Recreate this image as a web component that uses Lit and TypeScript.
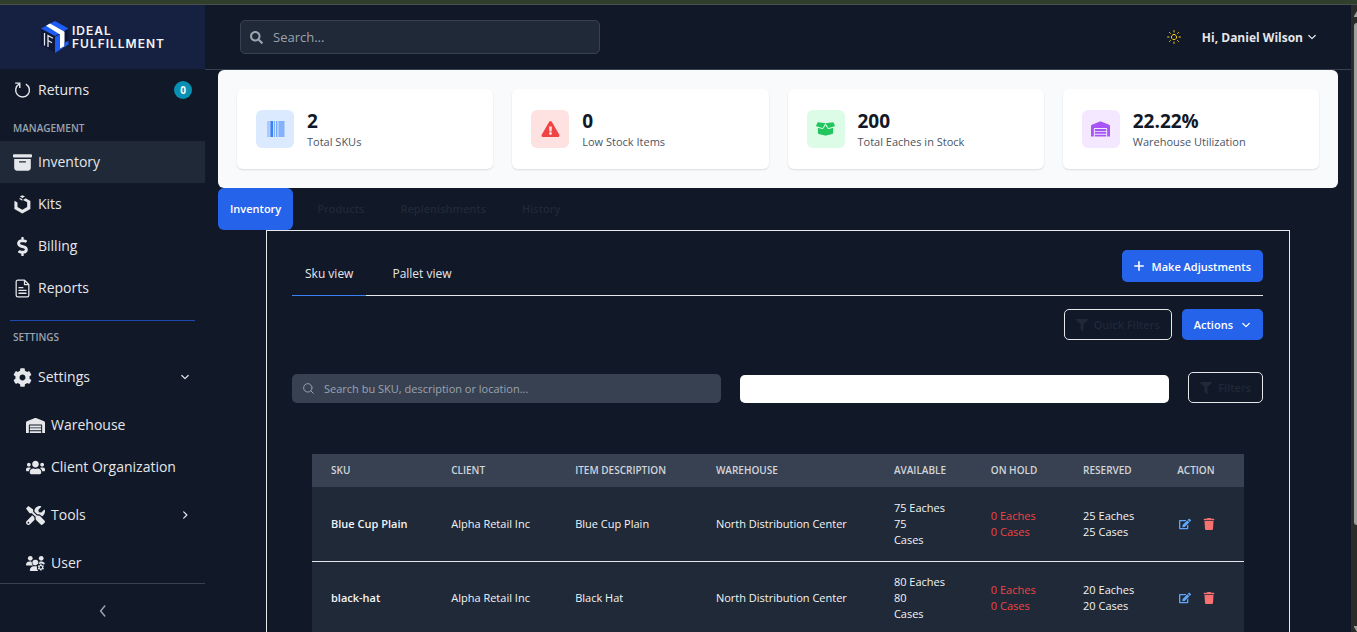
import { LitElement, html, css, svg, nothing } from "lit";
import { customElement, state } from "lit/decorators.js";
import { classMap } from "lit/directives/class-map.js";

type Glyph = { box: string; body: unknown };

const solid = (box: string, d: string): Glyph => ({ box, body: svg`<path fill="currentColor" d=${d}></path>` });
const line = (box: string, d: string, width = 2): Glyph => ({
  box,
  body: svg`<path fill="none" stroke="currentColor" stroke-width=${width} stroke-linecap="round" stroke-linejoin="round" d=${d}></path>`,
});

const GLYPHS: Record<string, Glyph> = {
  returns: {
    box: "0 0 16 16",
    body: svg`<g fill="none" stroke="currentColor" stroke-width="1.2"><path d="M10.8 2.600a5.800 5.800 0 1 1-5.700.1"></path><path d="M1.800 1.800h3.900v4"></path></g>`,
  },
  archive: solid("0 0 16 16", "M12.643 15C13.979 15 15 13.845 15 12.5V5H1v7.5C1 13.845 2.021 15 3.357 15zM5.5 7h5a.5.5 0 0 1 0 1h-5a.5.5 0 0 1 0-1M.8 1a.8.8 0 0 0-.8.8V3a.8.8 0 0 0 .8.8h14.4A.8.8 0 0 0 16 3V1.8a.8.8 0 0 0-.8-.8z"),
  kits: solid("0 0 18 20", "M.5 6l3.200 1.900v4.700l5.100 3 5.100-3V7.600L9.600 5.200 12.200 3.300l5.100 2.900v8.500l-8.500 4.900-8.300-4.900zM6.200 1.600L8.900.2l2.700 1.400-2.700 1.500zM5.200 3.900l1.800-.6 2 1.200-.2 1.500z"),
  dollar: solid("0 0 288 512", "M209.200 233.400l-108-31.600C88.700 198.200 80 186.500 80 173.500c0-16.300 13.200-29.500 29.500-29.500h66.300c12.200 0 24.200 3.700 34.200 10.500 6.100 4.100 14.300 3.100 19.500-2l34.800-34c7.100-6.900 6.100-18.400-1.800-24.500C238 74.800 207.400 64.100 176 64V16c0-8.800-7.200-16-16-16h-32c-8.800 0-16 7.200-16 16v48h-2.500C45.800 64-5.400 118.700.5 183.600c4.200 46.100 39.400 83.600 83.800 96.600l102.500 30c12.500 3.700 21.200 15.300 21.200 28.300 0 16.300-13.200 29.500-29.500 29.500h-66.300C100 368 88 364.300 78 357.500c-6.100-4.100-14.300-3.100-19.500 2l-34.800 34c-7.100 6.900-6.100 18.400 1.800 24.500 24.500 19.200 55.100 29.900 86.500 30v48c0 8.800 7.200 16 16 16h32c8.800 0 16-7.200 16-16v-48.200c46.600-.9 90.300-28.600 105.700-72.700 21.500-61.600-14.600-124.800-72.500-141.700z"),
  report: line("0 0 24 24", "M14.500 1.500H6a2 2 0 0 0-2 2v17a2 2 0 0 0 2 2h12a2 2 0 0 0 2-2V7zM14.500 1.500V7H20M7.500 11h5M7.500 14.500h9M7.500 18h9", 1.6),
  cog: solid("0 0 512 512", "M487.400 315.700l-42.600-24.600c4.300-23.200 4.300-47 0-70.200l42.600-24.600c4.900-2.800 7.100-8.600 5.500-14-11.100-35.600-30-67.800-54.700-94.600-3.800-4.100-10-5.100-14.800-2.300L380.800 110c-17.900-15.400-38.500-27.300-60.800-35.100V25.800c0-5.600-3.900-10.500-9.400-11.700-36.700-8.200-74.300-7.800-109.200 0-5.500 1.200-9.400 6.100-9.400 11.700V75c-22.200 7.900-42.800 19.800-60.800 35.100L88.700 85.500c-4.900-2.800-11-1.900-14.800 2.300-24.700 26.700-43.600 58.900-54.700 94.600-1.700 5.400.6 11.200 5.500 14L67.300 221c-4.300 23.200-4.300 47 0 70.200l-42.600 24.600c-4.900 2.800-7.100 8.600-5.500 14 11.100 35.600 30 67.800 54.700 94.600 3.800 4.100 10 5.100 14.800 2.300l42.600-24.600c17.900 15.400 38.500 27.300 60.800 35.100v49.200c0 5.600 3.900 10.500 9.400 11.700 36.700 8.200 74.300 7.800 109.200 0 5.500-1.200 9.400-6.100 9.400-11.700v-49.200c22.200-7.900 42.800-19.800 60.800-35.100l42.600 24.600c4.900 2.800 11 1.900 14.800-2.300 24.700-26.700 43.600-58.900 54.700-94.600 1.500-5.500-.7-11.300-5.600-14.100zM256 336c-44.100 0-80-35.900-80-80s35.900-80 80-80 80 35.900 80 80-35.900 80-80 80z"),
  warehouse: solid("0 0 640 512", "M504 352H136.400c-4.400 0-8 3.600-8 8l-.1 48c0 4.400 3.600 8 8 8H504c4.400 0 8-3.600 8-8v-48c0-4.400-3.600-8-8-8zm0 96H136.100c-4.400 0-8 3.600-8 8l-.1 48c0 4.400 3.600 8 8 8h368c4.400 0 8-3.600 8-8v-48c0-4.400-3.600-8-8-8zm0-192H136.600c-4.400 0-8 3.600-8 8l-.1 48c0 4.400 3.600 8 8 8H504c4.400 0 8-3.600 8-8v-48c0-4.400-3.600-8-8-8zm106.500-139L338.400 3.700a48.150 48.150 0 0 0-36.900 0L29.500 117C11.700 124.500 0 141.900 0 161.300V504c0 4.400 3.600 8 8 8h80c4.400 0 8-3.600 8-8V256c0-17.600 14.600-32 32.600-32h382.800c18 0 32.600 14.400 32.600 32v248c0 4.400 3.600 8 8 8h80c4.400 0 8-3.600 8-8V161.300c0-19.400-11.700-36.800-29.500-44.300z"),
  users: solid("0 0 640 512", "M96 224c35.300 0 64-28.700 64-64s-28.700-64-64-64-64 28.700-64 64 28.700 64 64 64zm448 0c35.300 0 64-28.700 64-64s-28.700-64-64-64-64 28.700-64 64 28.700 64 64 64zm32 32h-64c-17.600 0-33.500 7.100-45.100 18.600 40.300 22.100 68.900 62 75.100 109.400h66c17.700 0 32-14.300 32-32v-32c0-35.300-28.700-64-64-64zm-256 0c61.900 0 112-50.100 112-112S381.900 32 320 32 208 82.100 208 144s50.100 112 112 112zm76.800 32h-8.300c-20.800 10-43.900 16-68.500 16s-47.600-6-68.500-16h-8.300C179.600 288 128 339.600 128 403.200V432c0 26.500 21.500 48 48 48h288c26.500 0 48-21.500 48-48v-28.800c0-63.600-51.600-115.200-115.200-115.200zm-223.700-13.400C161.500 263.100 145.600 256 128 256H64c-35.300 0-64 28.700-64 64v32c0 17.700 14.300 32 32 32h65.900c6.300-47.400 34.900-87.300 75.200-109.400z"),
  tools: solid("0 0 512 512", "M501.100 395.700L384 278.600c-23.100-23.100-57.600-27.600-85.400-13.900L192 158.100V96L64 0 0 64l96 128h62.100l106.600 106.600c-13.600 27.800-9.200 62.300 13.900 85.400l117.100 117.100c14.600 14.600 38.200 14.600 52.700 0l52.700-52.700c14.500-14.600 14.500-38.200 0-52.700zM331.700 225c28.300 0 54.900 11 74.900 31l19.400 19.400c15.800-6.900 30.800-16.500 43.800-29.500 37.100-37.100 49.700-89.300 37.900-136.700-2.200-9-13.500-12.100-20.100-5.500l-74.400 74.400-67.900-11.300L334 98.900l74.400-74.400c6.600-6.600 3.400-17.900-5.700-20.200-47.400-11.700-99.600.9-136.600 37.900-28.500 28.500-41.900 66.100-41.200 103.600l82.100 82.100c8.100-1.900 16.500-2.900 24.700-2.900zm-103.900 82l-56.700-56.700L18.700 402.800c-25 25-25 65.500 0 90.500s65.500 25 90.500 0l123.600-123.600c-7.600-19.900-9.900-41.600-5-62.700zM64 472c-13.200 0-24-10.800-24-24 0-13.300 10.700-24 24-24s24 10.700 24 24c0 13.200-10.700 24-24 24z"),
  userCog: {
    box: "0 0 640 512",
    body: svg`<g fill="currentColor"><circle cx="144" cy="80" r="80"></circle><circle cx="512" cy="80" r="80"></circle><path d="M0 298.700C0 239.800 47.800 192 106.700 192h42.600c16 0 31 3.500 44.600 9.700-1.300 7.200-1.900 14.700-1.900 22.300 0 38.200 16.800 72.500 43.300 96H21.300C9.600 320 0 310.400 0 298.700zM320 128a96 96 0 0 1 92 124l-26 30a96 96 0 1 1-66-154zM448 202c14-7 28-10 42.700-10h42.600c50 0 92 34 104 80l-50 14c-40-44-106-44-150-6l-6-20c16-22 22-40 17-58zM128 485.300C128 411.700 187.700 352 261.300 352H372c-16 52-4 114 42 160H154.700c-14.700 0-26.700-12-26.700-26.700z"></path><path fill-rule="evenodd" d="M479 278h44l8 34 18 10 33-10 22 38-25 24v20l25 24-22 38-33-10-18 10-8 36h-44l-8-36-18-10-33 10-22-38 25-24v-20l-25-24 22-38 33 10 18-10zM501 344a40 40 0 1 0 .1 0z"></path></g>`,
  },
  search: solid("0 0 512 512", "M505 442.700L405.300 343c-4.500-4.500-10.600-7-17-7H372c27.600-35.300 44-79.700 44-128C416 93.100 322.900 0 208 0S0 93.100 0 208s93.100 208 208 208c48.300 0 92.700-16.400 128-44v16.300c0 6.400 2.500 12.500 7 17l99.700 99.700c9.400 9.400 24.600 9.400 33.900 0l28.300-28.300c9.400-9.400 9.400-24.600.1-34zM208 336c-70.700 0-128-57.200-128-128 0-70.700 57.200-128 128-128 70.700 0 128 57.200 128 128 0 70.700-57.200 128-128 128z"),
  lens: line("0 0 24 24", "M21 21l-4.800-4.800M18.500 10.800a7.700 7.700 0 1 1-15.500 0a7.700 7.700 0 1 1 15.500 0", 1.8),
  sun: line("0 0 24 24", "M12 7.500a4.500 4.500 0 1 0 .01 0M12 1v2.500M12 20.500V23M1 12h2.500M20.500 12H23M4.200 4.200l1.600 1.600M18.200 18.200l1.600 1.600M4.200 19.800l1.600-1.600M18.200 5.800l1.600-1.600", 1.7),
  down: line("0 0 10 10", "M1.800 3.500L5 6.700l3.200-3.200", 1.2),
  right: line("0 0 10 10", "M3.700 1.800L6.900 5 3.700 8.200", 1.2),
  left: line("0 0 10 10", "M6.500 .8L3 5l3.500 4.200", 1.2),
  plus: line("0 0 10 10", "M5 .8v8.400M.8 5h8.400", 1.6),
  filter: solid("0 0 512 512", "M487.976 0H24.028C2.710 0-8.047 25.866 7.058 40.971L192 225.941V432c0 7.831 3.821 15.170 10.237 19.662l80 55.980C298.020 518.690 320 507.493 320 487.980V225.941l184.947-184.970C520.021 25.896 509.338 0 487.976 0z"),
  barcode: {
    box: "0 0 18 16",
    body: svg`<g fill="#3b82f6"><path opacity=".3" d="M.5 0h2.500v16H.5z"></path><path d="M4 0h2.500v16H4z"></path><path opacity=".55" d="M3.300 0h.7v16h-.7zM7.300 0h1.200v16H7.300zM12.500 0h5.500v16h-5.500z"></path><path opacity=".8" d="M9.700 0h.9v16h-.9z"></path><path opacity=".3" d="M11 0h1.500v16H11z"></path></g>`,
  },
  alert: solid("0 0 576 512", "M569.517 440.013C587.975 472.007 564.806 512 527.940 512H48.054c-36.937 0-59.999-40.055-41.577-71.987L246.423 23.985c18.467-32.009 64.720-31.951 83.154 0l239.940 416.028zM288 354c-25.405 0-46 20.595-46 46s20.595 46 46 46 46-20.595 46-46-20.595-46-46-46zm-43.673-165.346l7.418 136c.347 6.364 5.609 11.346 11.982 11.346h48.546c6.373 0 11.635-4.982 11.982-11.346l7.418-136c.375-6.874-5.098-12.654-11.982-12.654h-63.383c-6.884 0-12.356 5.780-11.981 12.654z"),
  boxOpen: solid("0 0 640 512", "M425.700 256c-16.900 0-32.800-9-41.400-23.400L320 126l-64.200 106.600c-8.700 14.500-24.600 23.500-41.500 23.500-4.500 0-9-.6-13.300-1.900L64 215v178c0 14.700 10 27.500 24.200 31l216.200 54.100c10.200 2.500 20.900 2.500 31 0L551.800 424c14.200-3.600 24.200-16.400 24.200-31V215l-137 39.100c-4.300 1.300-8.800 1.900-13.300 1.900zm212.600-112.200L586.800 41c-3.100-6.200-9.800-9.800-16.700-8.900L320 64l91.700 152.100c3.800 6.300 11.400 9.300 18.500 7.300l197.900-56.500c9.900-2.900 14.700-13.900 10.200-23.100zM53.200 41L1.700 143.800c-4.600 9.200.3 20.200 10.100 23l197.900 56.500c7.100 2 14.700-1 18.500-7.300L320 64 69.800 32.100c-6.900-.8-13.500 2.700-16.600 8.900z"),
  edit: solid("0 0 576 512", "M402.600 83.200l90.200 90.200c3.800 3.800 3.800 10 0 13.800L274.400 405.600l-92.800 10.300c-12.400 1.400-22.900-9.100-21.500-21.500l10.300-92.800L388.800 83.200c3.800-3.800 10-3.800 13.800 0zm162-22.900l-48.800-48.800c-15.200-15.200-39.900-15.200-55.200 0l-35.400 35.400c-3.800 3.800-3.800 10 0 13.800l90.200 90.200c3.800 3.800 10 3.800 13.800 0l35.400-35.400c15.200-15.300 15.200-40 0-55.200zM384 346.200V448H64V128h229.800c3.200 0 6.200-1.300 8.500-3.500l40-40c7.600-7.600 2.200-20.500-8.500-20.500H48C21.500 64 0 85.500 0 112v352c0 26.500 21.500 48 48 48h352c26.500 0 48-21.500 48-48V306.200c0-10.700-12.900-16-20.500-8.500l-40 40c-2.200 2.300-3.500 5.300-3.500 8.500z"),
  trash: solid("0 0 448 512", "M432 32H312l-9.400-18.700A24 24 0 0 0 281.100 0H166.800a23.720 23.720 0 0 0-21.400 13.300L136 32H16A16 16 0 0 0 0 48v32a16 16 0 0 0 16 16h416a16 16 0 0 0 16-16V48a16 16 0 0 0-16-16zM53.200 467a48 48 0 0 0 47.900 45h245.800a48 48 0 0 0 47.900-45L416 128H32z"),
};

const icon = (name: string, cls = "i12") =>
  html`<svg class="icon ${cls}" viewBox=${GLYPHS[name].box} aria-hidden="true">${GLYPHS[name].body}</svg>`;

const base = css`
  * { box-sizing: border-box; }
  button, input { font: inherit; color: inherit; margin: 0; padding: 0; border: 0; background: none; }
  button, a { cursor: pointer; }
  a { color: inherit; text-decoration: none; }
  h2, p { margin: 0; font-weight: inherit; }
  .icon { flex: none; display: block; }
  .i10 { width: 10px; height: 10px; }
  .i12 { width: 12px; height: 12px; }
  .i13 { width: 13px; height: 13px; }
  .i19 { width: 19px; height: 19px; }
`;

@customElement("side-bar")
export class SideBar extends LitElement {
  static styles = [base, css`
    :host { display: flex; flex-direction: column; min-height: 0; background: #111827; color: #e5e7eb; }
    .brand { flex: none; height: 64px; display: flex; align-items: center; padding-left: 41px; gap: 3px; background: #162142; }
    .mark { width: 28px; height: 34px; flex: none; }
    .name { font: 600 12px/13px Inter, sans-serif; letter-spacing: 1px; color: #f3f4f6; }
    .name span { display: block; }
    nav { flex: 1; min-height: 0; overflow: hidden; }
    .item { display: flex; align-items: center; width: 100%; height: 42px; padding: 0 13px; gap: 6px; font-size: 14px; line-height: 20px; text-align: left; }
    .item.active { background: #1f2937; }
    .item.nested { padding-left: 26px; }
    .item span { flex: 1; }
    .item .badge { flex: none; width: 18px; height: 18px; border-radius: 9px; background: #0891b2; color: #fff; font-size: 10px; font-weight: 700; line-height: 18px; text-align: center; }
    .item .icon.chev { margin-right: 2px; }
    .group { font-size: 10px; line-height: 14px; font-weight: 600; color: #9ca3af; padding: 0 13px; }
    .group.first { margin: 10px 0 6px; }
    .second { margin: 11px 10px 12px; padding: 9px 3px 0; border-top: 1px solid #1e49b0; }
    .lead { margin-top: 6px; }
    .foot { flex: none; height: 49px; display: flex; align-items: center; justify-content: center; border-top: 1px solid #374151; color: #9ca3af; padding-top: 6px; }
  `];

  private item(name: string, label: string, cls = "", tail: unknown = nothing) {
    return html`<a href="#" class="item ${cls}">${icon(name, "i19")}<span>${label}</span>${tail}</a>`;
  }

  render() {
    return html`
      <div class="brand">
        <svg class="mark" viewBox="0 0 28 34" aria-hidden="true">
          <path fill="#0f1735" d="M0 8.500L14 16v17L0 25z"></path>
          <path fill="#0f1735" d="M24 11l3.500-2v13L24 24z"></path>
          <path fill="#1d5cf5" d="M0 8.500L14 1l13.500 7.500L14 16z"></path>
          <path fill="#fff" d="M5 5.800L9 3.600l14.500 8.200v14.500l-4.500 2.500V14.500z"></path>
          <path fill="#1d5cf5" d="M14 17l5-2.800v14.600l4.500-2.500v-3.800l4-1.500v3.500L14 33z"></path>
          <path fill="none" stroke="#e5e7eb" stroke-width="1.300" d="M3.500 13v12.500M7 27V15.500l5 2.800M7 20.500l4 2.200"></path>
        </svg>
        <div class="name"><span>IDEAL</span><span>FULFILLMENT</span></div>
      </div>
      <nav aria-label="Main">
        ${this.item("returns", "Returns", "", html`<b class="badge">0</b>`)}
        <p class="group first">MANAGEMENT</p>
        ${this.item("archive", "Inventory", "active")}
        ${this.item("kits", "Kits")}
        ${this.item("dollar", "Billing")}
        ${this.item("report", "Reports")}
        <p class="group second">SETTINGS</p>
        ${this.item("cog", "Settings", "", icon("down", "i10 chev"))}
        ${this.item("warehouse", "Warehouse", "nested lead")}
        ${this.item("users", "Client Organization", "nested")}
        ${this.item("tools", "Tools", "nested lead", icon("right", "i10 chev"))}
        ${this.item("userCog", "User", "nested lead")}
      </nav>
      <button class="foot" aria-label="Collapse sidebar">${icon("left", "i12")}</button>
    `;
  }
}

@customElement("top-bar")
export class TopBar extends LitElement {
  static styles = [base, css`
    :host { flex: none; height: 65px; display: flex; align-items: center; justify-content: space-between; padding: 0 34px 0 35px; border-bottom: 1px solid #374151; }
    .search { display: flex; align-items: center; gap: 10px; width: 360px; height: 34px; padding: 0 9px; border: 1px solid #374151; border-radius: 5px; background: #1f2937; color: #9ca3af; }
    input { flex: 1; min-width: 0; font-size: 13px; outline: 0; }
    input::placeholder { color: #9ca3af; opacity: 1; }
    .right { display: flex; align-items: center; gap: 21px; }
    .theme { color: #facc15; }
    .user { display: flex; align-items: center; gap: 4px; font-size: 12px; font-weight: 700; color: #e5e7eb; }
    .i14 { width: 14px; height: 14px; }
  `];
  render() {
    return html`
      <label class="search">${icon("search", "i13")}<input type="search" placeholder="Search..." aria-label="Search" /></label>
      <div class="right">
        <button class="theme" aria-label="Toggle theme">${icon("sun", "i14")}</button>
        <button class="user">Hi, Daniel Wilson ${icon("down", "i10")}</button>
      </div>
    `;
  }
}

const STATS = [
  { icon: "barcode", tone: "blue", value: "2", label: "Total SKUs" },
  { icon: "alert", tone: "red", value: "0", label: "Low Stock Items" },
  { icon: "boxOpen", tone: "green", value: "200", label: "Total Eaches in Stock" },
  { icon: "warehouse", tone: "purple", value: "22.22%", label: "Warehouse Utilization" },
];

@customElement("stat-cards")
export class StatCards extends LitElement {
  static styles = [base, css`
    :host { display: grid; grid-template-columns: repeat(4, 1fr); gap: 19px; padding: 19px; border-radius: 6px; background: #f9fafb; }
    .card { display: flex; align-items: center; gap: 13px; height: 80px; padding: 0 19px; border-radius: 6px; background: #fff; box-shadow: 0 1px 2px rgba(0, 0, 0, 0.12); }
    .tile { flex: none; width: 38px; height: 38px; border-radius: 6px; display: flex; align-items: center; justify-content: center; }
    .blue { background: #dbeafe; color: #3b82f6; }
    .red { background: #fee2e2; color: #ef4444; }
    .green { background: #dcfce7; color: #22c55e; }
    .purple { background: #f3e8ff; color: #a855f7; }
    .value { font-size: 19px; line-height: 26px; font-weight: 700; color: #111827; }
    .label { font-size: 11px; line-height: 16px; color: #4b5563; }
    .stat-icon { width: 19px; height: 16px; }
  `];
  render() {
    return STATS.map((s) => html`
      <div class="card">
        <div class="tile ${s.tone}">${icon(s.icon, "stat-icon")}</div>
        <div><p class="value">${s.value}</p><p class="label">${s.label}</p></div>
      </div>`);
  }
}

const ROWS = [
  { sku: "Blue Cup Plain", client: "Alpha Retail Inc", desc: "Blue Cup Plain", site: "North Distribution Center", free: 75, hold: 0, reserved: 25 },
  { sku: "black-hat", client: "Alpha Retail Inc", desc: "Black Hat", site: "North Distribution Center", free: 80, hold: 0, reserved: 20 },
];

@customElement("inventory-panel")
export class InventoryPanel extends LitElement {
  static styles = [base, css`
    :host { display: block; }
    .tabs { display: flex; gap: 12px; margin-right: 48px; }
    .tab { height: 42px; padding: 0 12px 2px; border-radius: 6px; font-size: 11px; font-weight: 600; color: #1f2937; }
    .tab.on { background: #2563eb; color: #fff; }
    .panel { margin: 0 48px; padding: 19px 26px 19px 25px; border: 1px solid #e5e7eb; min-height: 600px; }
    .views { display: flex; align-items: flex-start; border-bottom: 1px solid #e5e7eb; height: 46px; }
    .view { height: 46px; padding: 2px 13px 0; margin-right: 13px; font-size: 12px; color: #e5e7eb; border-bottom: 1px solid transparent; }
    .view.on { border-bottom-color: #3b82f6; }
    .btn { display: flex; align-items: center; justify-content: center; height: 31px; border-radius: 5px; font-size: 11px; font-weight: 600; white-space: nowrap; }
    .primary { background: #2563eb; color: #fff; padding: 0 12px; gap: 8px; }
    .adjust { height: 32px; margin-left: auto; }
    .ghost { border: 1px solid #e5e7eb; color: #1f2937; padding: 0 11px; gap: 6px; }
    .tools { display: flex; justify-content: flex-end; gap: 10px; margin-top: 13px; }
    .filters { display: grid; grid-template-columns: 1fr 1fr auto; align-items: end; column-gap: 19px; margin-top: 32px; }
    .find { display: flex; align-items: center; gap: 9px; height: 29px; padding: 0 10px; border-radius: 5px; background: #374151; color: #9ca3af; font-size: 11px; }
    .find input { flex: 1; min-width: 0; outline: 0; }
    .find input::placeholder { color: #9ca3af; opacity: 1; }
    .blank { height: 28px; border-radius: 5px; background: #fff; color: #111827; font-size: 11px; padding: 0 10px; min-width: 0; }
    .wrap { margin: 51px 19px 0 20px; }
    table { width: 100%; table-layout: fixed; border-collapse: collapse; background: #1f2937; color: #f3f4f6; font-size: 11px; line-height: 16px; }
    th { height: 33px; padding: 0 0 2px 19px; background: #374151; color: #d1d5db; font-size: 10px; font-weight: 600; text-align: left; white-space: nowrap; }
    td { height: 74px; padding: 0 0 0 19px; white-space: nowrap; }
    tbody tr { border-bottom: 1px solid #e5e7eb; }
    .sku { font-weight: 600; }
    .hold { color: #ef4444; }
    .free span, .hold span, .kept span { display: block; }
    .acts { display: flex; gap: 12px; padding-left: 2px; }
    .edit { color: #60a5fa; }
    .del { color: #f87171; }
    .c1 { width: 12.9%; } .c2 { width: 13.3%; } .c3 { width: 15.1%; } .c4 { width: 19.1%; }
    .c5 { width: 10.4%; } .c6 { width: 9.9%; } .c7 { width: 10.1%; }
  `];

  @state() private tab = "Inventory";
  @state() private view = "Sku view";

  render() {
    return html`
      <div class="tabs">
        ${["Inventory", "Products", "Replenishments", "History"].map((t) => html`
          <button class=${classMap({ tab: true, on: t === this.tab })} @click=${() => (this.tab = t)}>${t}</button>`)}
      </div>
      <div class="panel">
        <div class="views">
          ${["Sku view", "Pallet view"].map((v) => html`
            <button class=${classMap({ view: true, on: v === this.view })} @click=${() => (this.view = v)}>${v}</button>`)}
          <button class="btn primary adjust">${icon("plus", "i10")}Make Adjustments</button>
        </div>
        <div class="tools">
          <button class="btn ghost">${icon("filter", "i12")}Quick Filters</button>
          <button class="btn primary">Actions${icon("down", "i10")}</button>
        </div>
        <div class="filters">
          <label class="find">${icon("lens", "i13")}<input type="text" placeholder="Search bu SKU, description or location..." aria-label="Search inventory" /></label>
          <input class="blank" type="text" aria-label="Location" />
          <button class="btn ghost">${icon("filter", "i12")}Filters</button>
        </div>
        <div class="wrap">
          <table>
            <colgroup><col class="c1" /><col class="c2" /><col class="c3" /><col class="c4" /><col class="c5" /><col class="c6" /><col class="c7" /><col /></colgroup>
            <thead><tr>
              ${["SKU", "CLIENT", "ITEM DESCRIPTION", "WAREHOUSE", "AVAILABLE", "ON HOLD", "RESERVED", "ACTION"].map((h) => html`<th scope="col">${h}</th>`)}
            </tr></thead>
            <tbody>
              ${ROWS.map((r) => html`<tr>
                <td class="sku">${r.sku}</td><td>${r.client}</td><td>${r.desc}</td><td>${r.site}</td>
                <td class="free"><span>${r.free} Eaches</span><span>${r.free}</span><span>Cases</span></td>
                <td class="hold"><span>${r.hold} Eaches</span><span>${r.hold} Cases</span></td>
                <td class="kept"><span>${r.reserved} Eaches</span><span>${r.reserved} Cases</span></td>
                <td><div class="acts">
                  <button class="edit" aria-label="Edit ${r.sku}">${icon("edit", "i12")}</button>
                  <button class="del" aria-label="Delete ${r.sku}">${icon("trash", "i12")}</button>
                </div></td>
              </tr>`)}
            </tbody>
          </table>
        </div>
      </div>
    `;
  }
}

@customElement("app-root")
export class AppRoot extends LitElement {
  static styles = [base, css`
    :host { display: grid; grid-template: 5px minmax(0, 1fr) / 205px minmax(0, 1fr) 6px; height: 100vh; overflow: hidden; background: #111827; font-family: "Open Sans", "Noto Sans", sans-serif; }
    .strip { grid-column: 1 / -1; background: #2f3f2c; border-bottom: 1px solid #4a4f4a; }
    main { display: flex; flex-direction: column; min-width: 0; min-height: 0; }
    .body { flex: 1; min-height: 0; overflow: hidden; padding: 0 13px; }
    .rail { display: flex; flex-direction: column; align-items: stretch; background: #2b2b2b; padding: 6px 0 0 3px; gap: 6px; color: #9f9f9f; }
    .thumb { flex: 508; border-radius: 3px 0 0 3px; background: #9f9f9f; }
    .rest { flex: 90; }
    .arrow { width: 3px; height: 6px; flex: none; }
  `];
  render() {
    return html`
      <div class="strip"></div>
      <side-bar></side-bar>
      <main>
        <top-bar></top-bar>
        <div class="body"><stat-cards></stat-cards><inventory-panel></inventory-panel></div>
      </main>
      <div class="rail">
        <svg class="arrow" viewBox="0 0 3 6" aria-hidden="true"><path fill="currentColor" d="M3 0v6H0V5z"></path></svg>
        <div class="thumb"></div>
        <div class="rest"></div>
        <svg class="arrow" viewBox="0 0 3 6" aria-hidden="true"><path fill="currentColor" d="M3 6V0H0v1z"></path></svg>
      </div>
    `;
  }
}
